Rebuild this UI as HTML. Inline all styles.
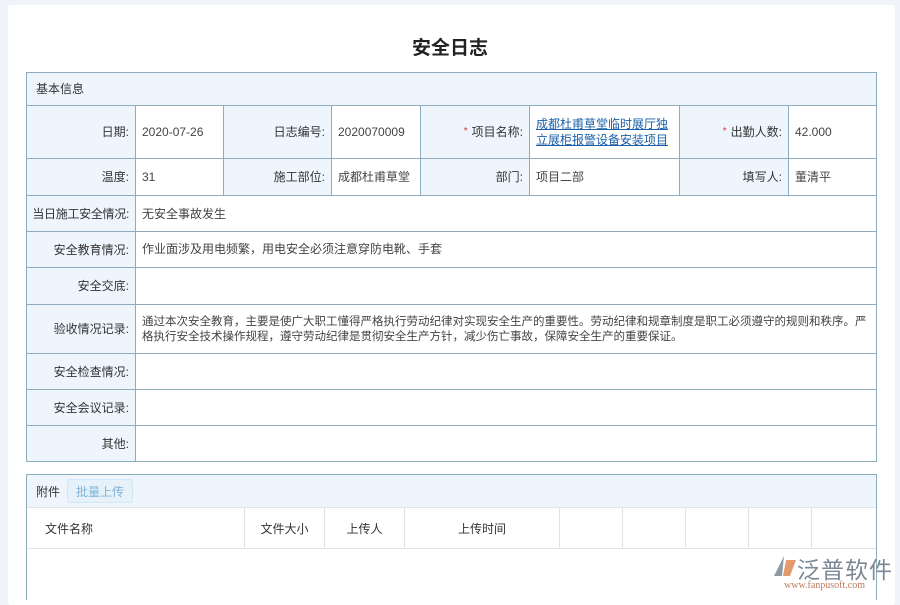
<!DOCTYPE html>
<html><head><meta charset="utf-8"><style>
*{box-sizing:border-box;margin:0;padding:0}
body{width:900px;height:600px;background:#f0f4fa;font-family:"Liberation Sans","Noto Sans CJK SC",sans-serif;font-size:12px;color:#333;position:relative;overflow:hidden}
.card{position:absolute;left:8px;top:5px;width:887px;height:600px;background:#fff;border-radius:3px}
h1{position:absolute;left:0;width:900px;top:33px;text-align:center;font-size:19px;font-weight:bold;color:#222}
.c{position:absolute;border:1px solid #8eacbb;display:flex;align-items:center;padding:0 6px;line-height:16px;white-space:nowrap}
.l{background:#eef5fc;justify-content:flex-end}
.v{background:#fff;color:#444}
.s{color:#d33;margin-right:4px;font-size:10px}
a{color:#1a5fa8;text-decoration:underline;white-space:normal}
.a{position:absolute;display:flex;align-items:center;justify-content:center;border-right:1px solid #e3e3e3;height:40px;top:508px}
</style></head><body>
<div class="card"></div>
<h1>安全日志</h1>
<div class="c l" style="left:26px;top:72px;width:851px;height:34px;justify-content:flex-start;padding-left:9px">基本信息</div>

<div class="c l" style="left:26px;top:105px;width:110px;height:54px">日期:</div>
<div class="c v" style="left:135px;top:105px;width:89px;height:54px">2020-07-26</div>
<div class="c l" style="left:223px;top:105px;width:109px;height:54px">日志编号:</div>
<div class="c v" style="left:331px;top:105px;width:90px;height:54px">2020070009</div>
<div class="c l" style="left:420px;top:105px;width:110px;height:54px"><span class="s">*</span>项目名称:</div>
<div class="c v" style="left:529px;top:105px;width:151px;height:54px"><a>成都杜甫草堂临时展厅独立展柜报警设备安装项目</a></div>
<div class="c l" style="left:679px;top:105px;width:110px;height:54px"><span class="s">*</span>出勤人数:</div>
<div class="c v" style="left:788px;top:105px;width:89px;height:54px">42.000</div>

<div class="c l" style="left:26px;top:158px;width:110px;height:38px">温度:</div>
<div class="c v" style="left:135px;top:158px;width:89px;height:38px">31</div>
<div class="c l" style="left:223px;top:158px;width:109px;height:38px">施工部位:</div>
<div class="c v" style="left:331px;top:158px;width:90px;height:38px">成都杜甫草堂</div>
<div class="c l" style="left:420px;top:158px;width:110px;height:38px">部门:</div>
<div class="c v" style="left:529px;top:158px;width:151px;height:38px">项目二部</div>
<div class="c l" style="left:679px;top:158px;width:110px;height:38px">填写人:</div>
<div class="c v" style="left:788px;top:158px;width:89px;height:38px">董清平</div>

<div class="c l" style="left:26px;top:195px;width:110px;height:37px;padding:0 6px 0 2px;letter-spacing:-0.3px">当日施工安全情况:</div>
<div class="c v" style="left:135px;top:195px;width:742px;height:37px">无安全事故发生</div>
<div class="c l" style="left:26px;top:231px;width:110px;height:37px">安全教育情况:</div>
<div class="c v" style="left:135px;top:231px;width:742px;height:37px;align-items:flex-start;padding-top:9px">作业面涉及用电频繁，用电安全必须注意穿防电靴、手套</div>
<div class="c l" style="left:26px;top:267px;width:110px;height:38px">安全交底:</div>
<div class="c v" style="left:135px;top:267px;width:742px;height:38px"></div>
<div class="c l" style="left:26px;top:304px;width:110px;height:50px">验收情况记录:</div>
<div class="c v" style="left:135px;top:304px;width:742px;height:50px;align-items:flex-start;padding-top:10px;font-size:11.5px;white-space:normal;line-height:15px">通过本次安全教育，主要是使广大职工懂得严格执行劳动纪律对实现安全生产的重要性。劳动纪律和规章制度是职工必须遵守的规则和秩序。严格执行安全技术操作规程，遵守劳动纪律是贯彻安全生产方针，减少伤亡事故，保障安全生产的重要保证。</div>
<div class="c l" style="left:26px;top:353px;width:110px;height:37px">安全检查情况:</div>
<div class="c v" style="left:135px;top:353px;width:742px;height:37px"></div>
<div class="c l" style="left:26px;top:389px;width:110px;height:37px">安全会议记录:</div>
<div class="c v" style="left:135px;top:389px;width:742px;height:37px"></div>
<div class="c l" style="left:26px;top:425px;width:110px;height:37px">其他:</div>
<div class="c v" style="left:135px;top:425px;width:742px;height:37px"></div>

<div style="position:absolute;left:26px;top:474px;width:851px;height:126px;border:1px solid #8eacbb;border-bottom:none"></div>
<div style="position:absolute;left:27px;top:475px;width:849px;height:33px;background:#eef5fc;border-bottom:1px solid #e3e3e3"></div>
<div style="position:absolute;left:36px;top:483px">附件</div>
<div style="position:absolute;left:67px;top:479px;width:66px;height:24px;border:1px solid #d4e6f3;background:#e6f1fa;border-radius:3px;color:#7fb3d9;display:flex;align-items:center;justify-content:center">批量上传</div>
<div class="a" style="left:27px;width:218px;justify-content:flex-start;padding-left:18px">文件名称</div>
<div class="a" style="left:245px;width:80px">文件大小</div>
<div class="a" style="left:325px;width:80px">上传人</div>
<div class="a" style="left:405px;width:155px">上传时间</div>
<div class="a" style="left:560px;width:63px"></div>
<div class="a" style="left:623px;width:63px"></div>
<div class="a" style="left:686px;width:63px"></div>
<div class="a" style="left:749px;width:63px"></div>
<div style="position:absolute;left:27px;top:548px;width:849px;border-top:1px solid #e3e3e3"></div>
<svg style="position:absolute;left:770px;top:554px" width="28" height="26" viewBox="0 0 28 26"><path d="M14 2 L4 22 L12 22 Z" fill="#8d9aa6"/><path d="M16 6 L26 6 L20 22 L13 22 Z" fill="#e39a6e"/></svg>
<div style="position:absolute;left:797px;top:551px;font-size:23px;color:#7a8794;letter-spacing:1px">泛普软件</div>
<div style="position:absolute;left:784px;top:580px;font-size:10px;color:#c07a60;font-family:'Liberation Serif',serif">www.fanpusoft.com</div>
</body></html>
